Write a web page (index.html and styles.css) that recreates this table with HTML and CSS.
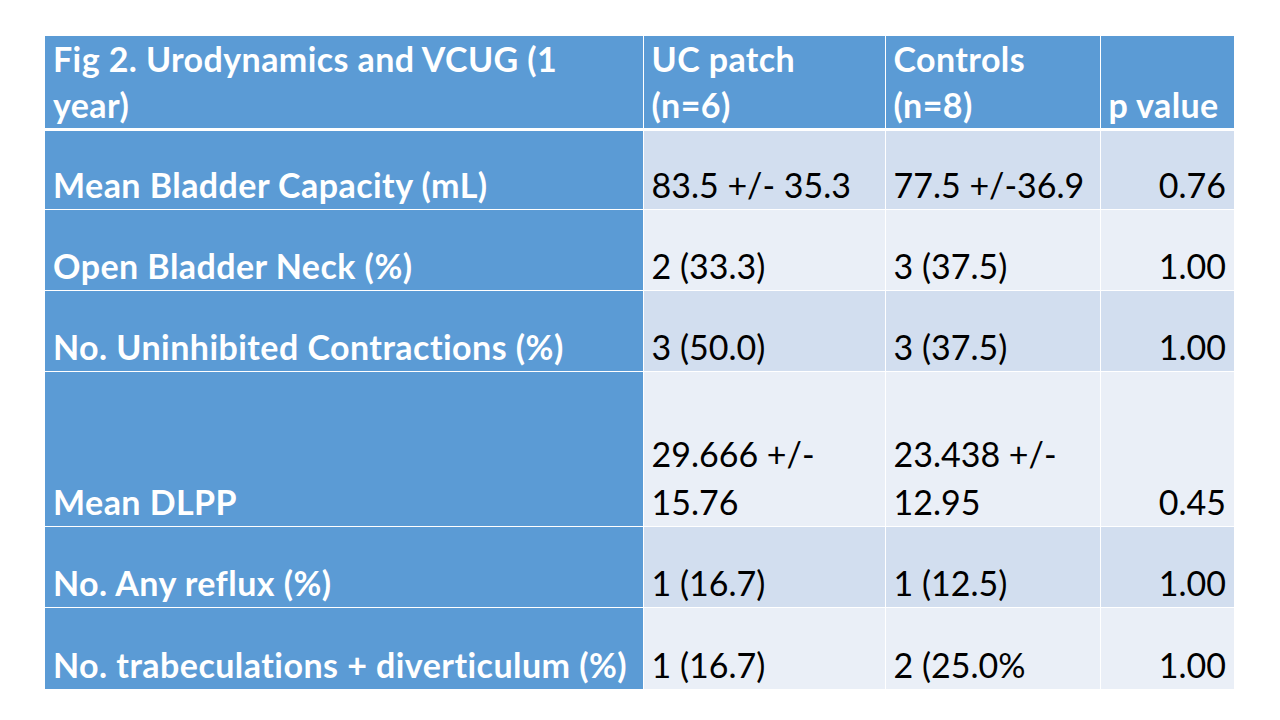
FILE: index.html
```html
<!DOCTYPE html>
<html>
<head>
<meta charset="utf-8">
<link rel="stylesheet" href="styles.css">
</head>
<body>
<table class="tbl">
  <colgroup>
    <col class="c1"><col class="c2"><col class="c3"><col class="c4">
  </colgroup>
  <thead>
    <tr class="head">
      <th>Fig 2. Urodynamics and VCUG (1 year)</th>
      <th>UC patch<br>(n=6)</th>
      <th>Controls<br>(n=8)</th>
      <th>p value</th>
    </tr>
  </thead>
  <tbody>
    <tr class="odd">
      <th>Mean Bladder Capacity (mL)</th>
      <td>83.5 +/- 35.3</td>
      <td>77.5 +/-36.9</td>
      <td class="num">0.76</td>
    </tr>
    <tr class="even">
      <th>Open Bladder Neck (%)</th>
      <td>2 (33.3)</td>
      <td>3 (37.5)</td>
      <td class="num">1.00</td>
    </tr>
    <tr class="odd">
      <th>No. Uninhibited Contractions (%)</th>
      <td>3 (50.0)</td>
      <td>3 (37.5)</td>
      <td class="num">1.00</td>
    </tr>
    <tr class="even tall">
      <th>Mean DLPP</th>
      <td>29.666 +/-<br>15.76</td>
      <td>23.438 +/-<br>12.95</td>
      <td class="num">0.45</td>
    </tr>
    <tr class="odd">
      <th>No. Any reflux (%)</th>
      <td>1 (16.7)</td>
      <td>1 (12.5)</td>
      <td class="num">1.00</td>
    </tr>
    <tr class="even">
      <th>No. trabeculations + diverticulum (%)</th>
      <td>1 (16.7)</td>
      <td>2 (25.0%</td>
      <td class="num">1.00</td>
    </tr>
  </tbody>
</table>
</body>
</html>
```

FILE: styles.css
```css
html, body {
  margin: 0;
  padding: 0;
  background: #ffffff;
}
body {
  padding: 36px 0 0 45px;
  font-family: Lato, "Liberation Sans", sans-serif;
}
.tbl {
  border-collapse: collapse;
  table-layout: fixed;
  width: 1189px;
  font-size: 34px;
  line-height: 48px;
  font-variant-ligatures: none;
}
.c1 { width: 598px; }
.c2 { width: 242px; }
.c3 { width: 215px; }
.c4 { width: 134px; }
.tbl th, .tbl td {
  vertical-align: bottom;
  text-align: left;
  padding: 0 8px 0 8px;
  border: 1px solid #ffffff;
  white-space: nowrap;
}
.tbl tr:first-child > * { border-top: none; }
.tbl tr > *:first-child { border-left: none; }
.tbl tr > *:last-child { border-right: none; }
.tbl tbody tr:last-child > * { border-bottom: none; }
.head th {
  background: #5b9bd5;
  color: #ffffff;
  font-weight: 700;
  height: 91px;
  line-height: 46px;
  padding-bottom: 0;
  white-space: normal;
  letter-spacing: 0.4px;
  border-bottom: 3px solid #ffffff;
}
.head th:first-child { padding-right: 60px; }
tbody th {
  background: #5b9bd5;
  color: #ffffff;
  font-weight: 700;
  letter-spacing: 0.45px;
}
tbody tr { height: 81px; }
tbody tr:first-child { height: 80px; }
tbody tr.tall { height: 155px; }
.odd td { background: #d2deef; }
.even td { background: #eaeff7; }
tbody td { color: #000000; font-weight: 400; }
.tbl td.num { text-align: right; }
```
